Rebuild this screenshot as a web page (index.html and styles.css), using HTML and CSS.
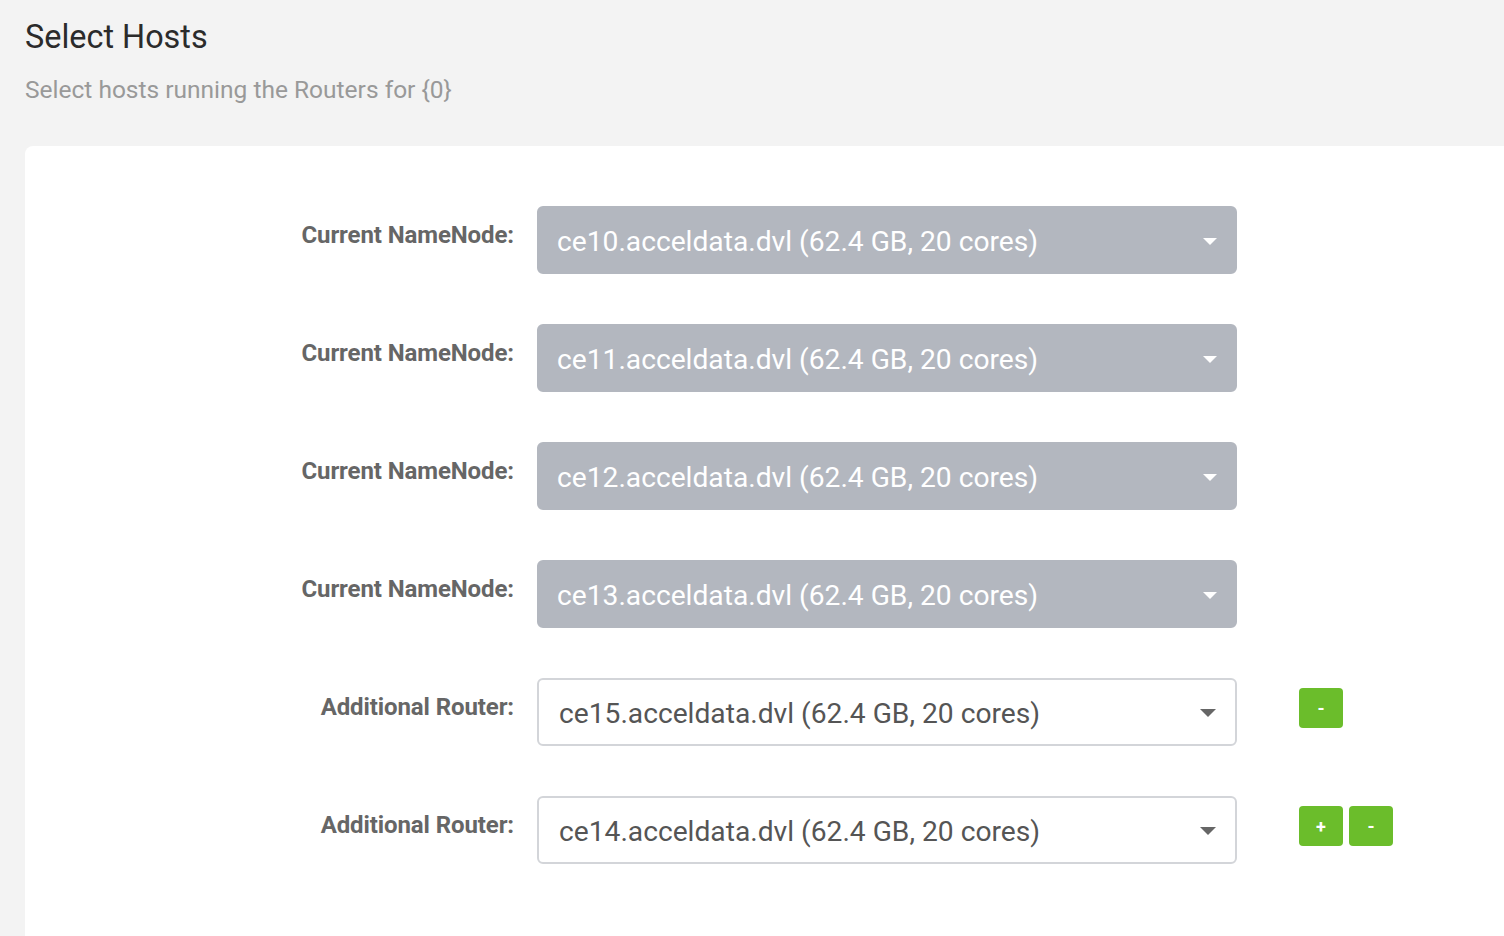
FILE: index.html
```html
<!DOCTYPE html>
<html>
<head>
<meta charset="utf-8">
<link rel="stylesheet" href="styles.css">
</head>
<body>
<div class="page">
  <h1 class="title">Select Hosts</h1>
  <p class="subtitle">Select hosts running the Routers for {0}</p>
  <div class="card">
    <div class="row">
      <div class="label">Current NameNode:</div>
      <div class="select disabled"><span class="value">ce10.acceldata.dvl (62.4 GB, 20 cores)</span><span class="arrow"></span></div>
    </div>
    <div class="row">
      <div class="label">Current NameNode:</div>
      <div class="select disabled"><span class="value">ce11.acceldata.dvl (62.4 GB, 20 cores)</span><span class="arrow"></span></div>
    </div>
    <div class="row">
      <div class="label">Current NameNode:</div>
      <div class="select disabled"><span class="value">ce12.acceldata.dvl (62.4 GB, 20 cores)</span><span class="arrow"></span></div>
    </div>
    <div class="row">
      <div class="label">Current NameNode:</div>
      <div class="select disabled"><span class="value">ce13.acceldata.dvl (62.4 GB, 20 cores)</span><span class="arrow"></span></div>
    </div>
    <div class="row">
      <div class="label">Additional Router:</div>
      <div class="select"><span class="value">ce15.acceldata.dvl (62.4 GB, 20 cores)</span><span class="arrow"></span></div>
      <div class="buttons"><button class="btn">-</button></div>
    </div>
    <div class="row">
      <div class="label">Additional Router:</div>
      <div class="select"><span class="value">ce14.acceldata.dvl (62.4 GB, 20 cores)</span><span class="arrow"></span></div>
      <div class="buttons"><button class="btn">+</button><button class="btn">-</button></div>
    </div>
  </div>
</div>
</body>
</html>
```
FILE: styles.css
```css
html, body {
  margin: 0;
  padding: 0;
  height: 100%;
  overflow: hidden;
  background: #f3f3f3;
  font-family: Roboto, "Liberation Sans", Arial, sans-serif;
}
.page {
  padding: 0 0 0 25px;
}
.title {
  margin: 0;
  padding-top: 16px;
  font-size: 32.4px;
  font-weight: 400;
  line-height: 42px;
  color: #2b2b2b;
}
.subtitle {
  margin: 16px 0 0;
  font-size: 24.5px;
  line-height: 32px;
  color: #999;
}
.card {
  margin-top: 40px;
  background: #fff;
  border-top-left-radius: 8px;
  padding: 60px 0 0 0;
  height: 730px;
}
.row {
  display: flex;
  align-items: flex-start;
  margin-bottom: 50px;
}
.label {
  width: 489px;
  text-align: right;
  font-size: 24px;
  font-weight: 700;
  color: #666;
  padding-top: 16px;
  line-height: 26px;
  letter-spacing: -0.1px;
}
.select {
  margin-left: 23px;
  width: 700px;
  height: 68px;
  box-sizing: border-box;
  border: 2px solid #d3d5d9;
  border-radius: 6px;
  display: flex;
  align-items: center;
  padding: 2px 20px 0;
  color: #555;
  font-size: 28.2px;
}
.select.disabled {
  background: #b3b7bf;
  border-color: #b3b7bf;
  color: #fff;
  padding-left: 18px;
}
.value {
  flex: 1;
  white-space: nowrap;
}
.arrow {
  width: 0;
  height: 0;
  border-left: 8px solid transparent;
  border-right: 8px solid transparent;
  border-top: 8px solid #666;
  margin-right: -1px;
}
.select.disabled .arrow {
  border-left-width: 7.5px;
  border-right-width: 7.5px;
  border-top-width: 7px;
  border-top-color: #fff;
  margin-right: -2px;
}
.buttons {
  margin-left: 62px;
  margin-top: 10px;
  display: flex;
  gap: 6px;
}
.btn {
  width: 44px;
  height: 40px;
  border: none;
  border-radius: 4px;
  background: #6bbd2b;
  color: #fff;
  font-family: Roboto, "Liberation Sans", Arial, sans-serif;
  font-size: 18px;
  font-weight: 700;
  padding: 0;
}
```
